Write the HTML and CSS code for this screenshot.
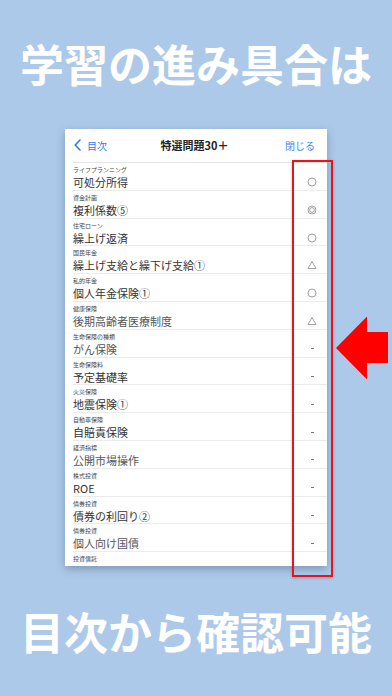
FILE: index.html
```html
<!DOCTYPE html>
<html lang="ja">

<head>
    <meta charset="UTF-8">
    <meta name="viewport" content="width=device-width, initial-scale=1.0">
    <title>特選問題30＋</title>
    <link rel="stylesheet" href="styles.css">
</head>

<body>
    <div class="screen">
        <h1 class="headline top">学習の進み具合は</h1>

        <div class="card">
            <div class="nav">
                <div class="back">
                    <svg width="7" height="12" viewBox="0 0 7 12"><path d="M6 1 L1.2 6 L6 11" fill="none" stroke="#2d7bf0" stroke-width="1.6" stroke-linecap="round" stroke-linejoin="round"/></svg>
                    <span>目次</span>
                </div>
                <div class="nav-title">特選問題30＋</div>
                <div class="close">閉じる</div>
            </div>

            <div class="list">
                <div class="row">
                    <div class="text"><div class="cat">ライフプランニング</div><div class="title">可処分所得</div></div>
                    <div class="mark"><svg width="10" height="10" viewBox="0 0 10 10"><circle cx="5" cy="5" r="4" fill="none" stroke="#8c8c8c" stroke-width="0.8"/></svg></div>
                </div>
                <div class="row">
                    <div class="text"><div class="cat">資金計画</div><div class="title">複利係数⑤</div></div>
                    <div class="mark"><svg width="10" height="10" viewBox="0 0 10 10"><circle cx="5" cy="5" r="4" fill="none" stroke="#8c8c8c" stroke-width="0.8"/><circle cx="5" cy="5" r="2.4" fill="none" stroke="#8c8c8c" stroke-width="0.8"/></svg></div>
                </div>
                <div class="row">
                    <div class="text"><div class="cat">住宅ローン</div><div class="title">繰上げ返済</div></div>
                    <div class="mark"><svg width="10" height="10" viewBox="0 0 10 10"><circle cx="5" cy="5" r="4" fill="none" stroke="#8c8c8c" stroke-width="0.8"/></svg></div>
                </div>
                <div class="row">
                    <div class="text"><div class="cat">国民年金</div><div class="title">繰上げ支給と繰下げ支給①</div></div>
                    <div class="mark"><svg width="10" height="10" viewBox="0 0 10 10"><path d="M5 1.5 L9 8.5 L1 8.5 Z" fill="none" stroke="#8c8c8c" stroke-width="0.8" stroke-linejoin="round"/></svg></div>
                </div>
                <div class="row">
                    <div class="text"><div class="cat">私的年金</div><div class="title">個人年金保険①</div></div>
                    <div class="mark"><svg width="10" height="10" viewBox="0 0 10 10"><circle cx="5" cy="5" r="4" fill="none" stroke="#8c8c8c" stroke-width="0.8"/></svg></div>
                </div>
                <div class="row">
                    <div class="text"><div class="cat">健康保険</div><div class="title light">後期高齢者医療制度</div></div>
                    <div class="mark"><svg width="10" height="10" viewBox="0 0 10 10"><path d="M5 1.5 L9 8.5 L1 8.5 Z" fill="none" stroke="#8c8c8c" stroke-width="0.8" stroke-linejoin="round"/></svg></div>
                </div>
                <div class="row">
                    <div class="text"><div class="cat">生命保険の種類</div><div class="title light">がん保険</div></div>
                    <div class="mark"><span class="dash"></span></div>
                </div>
                <div class="row">
                    <div class="text"><div class="cat">生命保険料</div><div class="title">予定基礎率</div></div>
                    <div class="mark"><span class="dash"></span></div>
                </div>
                <div class="row">
                    <div class="text"><div class="cat">火災保険</div><div class="title">地震保険①</div></div>
                    <div class="mark"><span class="dash"></span></div>
                </div>
                <div class="row">
                    <div class="text"><div class="cat">自動車保険</div><div class="title">自賠責保険</div></div>
                    <div class="mark"><span class="dash"></span></div>
                </div>
                <div class="row">
                    <div class="text"><div class="cat">経済指標</div><div class="title light">公開市場操作</div></div>
                    <div class="mark"><span class="dash"></span></div>
                </div>
                <div class="row">
                    <div class="text"><div class="cat">株式投資</div><div class="title">ROE</div></div>
                    <div class="mark"><span class="dash"></span></div>
                </div>
                <div class="row">
                    <div class="text"><div class="cat">債券投資</div><div class="title">債券の利回り②</div></div>
                    <div class="mark"><span class="dash"></span></div>
                </div>
                <div class="row">
                    <div class="text"><div class="cat">債券投資</div><div class="title light">個人向け国債</div></div>
                    <div class="mark"><span class="dash"></span></div>
                </div>
                <div class="row">
                    <div class="text"><div class="cat">投資信託</div><div class="title">普通分配金と特別分配金</div></div>
                    <div class="mark"><span class="dash"></span></div>
                </div>
            </div>
        </div>

        <h1 class="headline bottom">目次から確認可能</h1>

        <div class="highlight"></div>
        <svg class="arrow" width="56" height="66" viewBox="0 0 56 66"><path d="M0 32 L31 0.5 L31 16 L52 16 L52 47 L31 47 L31 63.5 Z" fill="#ff0000"/></svg>
    </div>
</body>

</html>
```

FILE: styles.css
```css
body {
    margin: 0;
    font-family: "Noto Sans CJK JP", "Noto Sans", sans-serif;
    background-color: #adc9e9;
}

.screen {
    position: relative;
    width: 392px;
    height: 696px;
    overflow: hidden;
    display: flex;
    flex-direction: column;
}

.headline {
    margin: 0;
    color: #fff;
    font-size: 44px;
    font-weight: 700;
    text-align: center;
    line-height: 44px;
    letter-spacing: 0;
}

.headline.top {
    padding-top: 41px;
    height: 88px;
}

.headline.bottom {
    padding-top: 43px;
}

.card {
    margin-left: 65px;
    width: 262px;
    height: 437px;
    background-color: #fff;
    box-shadow: 0 3px 8px rgba(40, 60, 90, 0.35);
    overflow: hidden;
}

.nav {
    height: 34px;
    display: grid;
    grid-template-columns: 1fr auto 1fr;
    align-items: center;
    padding: 0 12px 0 9px;
    box-sizing: border-box;
    margin-top: -1px;
}

.nav .back {
    display: flex;
    align-items: center;
    gap: 6px;
    color: #2d7bf0;
    font-size: 10px;
}

.nav .nav-title {
    font-size: 11px;
    font-weight: 700;
    color: #222;
}

.nav .close {
    text-align: right;
    color: #3f8ae8;
    font-size: 10px;
}

.list {
    border-top: 1px solid #e4e4e4;
    margin-left: 8px;
}

.row {
    height: 27.8px;
    box-sizing: border-box;
    display: flex;
    align-items: flex-end;
    padding-top: 3px;
    padding-bottom: 0.8px;
    border-bottom: 1px solid #ebebeb;
}

.row .text {
    flex: 1;
}

.row .cat {
    font-size: 6px;
    line-height: 8px;
    height: 8px;
    margin-bottom: 1px;
    color: #444;
}

.row .title {
    font-size: 11px;
    line-height: 14px;
    height: 14px;
    color: #333;
    white-space: nowrap;
}

.row .title.light {
    color: #555;
}

.row .mark {
    width: 14px;
    height: 14px;
    margin-right: 8px;
    display: flex;
    align-items: center;
    justify-content: center;
}

.dash {
    width: 3px;
    height: 1px;
    background-color: #777;
}

.highlight {
    position: absolute;
    left: 292px;
    top: 160px;
    width: 41px;
    height: 417px;
    border: 2.5px solid #e8141c;
    box-sizing: border-box;
    box-shadow: 0 1px 3px rgba(0, 0, 0, 0.2);
}

.arrow {
    position: absolute;
    left: 336px;
    top: 316px;
}
```
